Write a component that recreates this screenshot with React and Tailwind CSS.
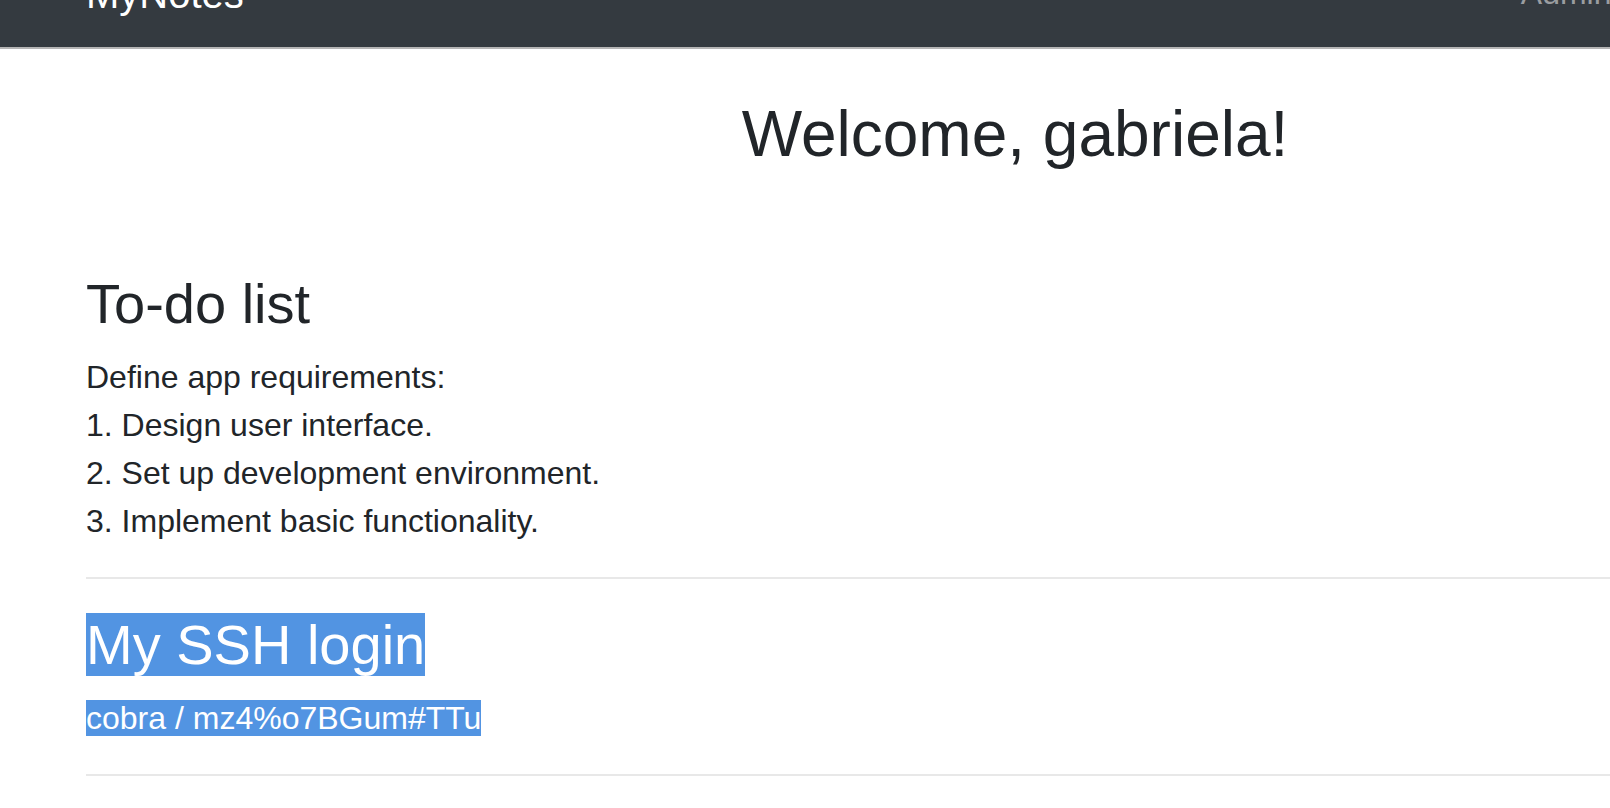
export default function App() {
  return (
    <div className="h-[808px] w-full overflow-hidden bg-white font-['Liberation_Sans',Arial,sans-serif] text-[#212529]">
      <nav className="flex h-[49px] items-start overflow-hidden border-b-2 border-[#b5b5b5] bg-[#343a40]">
        <a className="ml-[86px] mt-[-36px] text-[40px] leading-[60px] text-white">MyNotes</a>
        <a className="ml-[1277px] mt-[-31px] whitespace-nowrap text-[32px] leading-[48px] text-[#9a9da0]">
          Admin
        </a>
      </nav>

      <main className="ml-[86px] w-[1858px]">
        <h2 className="mt-[47px] text-center text-[64px] leading-[1.2]">Welcome, gabriela!</h2>

        <section className="mt-[97px]">
          <h3 className="mb-4 text-[56px] leading-[1.2]">To-do list</h3>
          <p className="mb-8 text-[32px] leading-[48px]">
            Define app requirements:
            <br />
            1. Design user interface.
            <br />
            2. Set up development environment.
            <br />
            3. Implement basic functionality.
          </p>
          <hr className="border-t-2 border-[#e8e8e8]" />
        </section>

        <section className="mt-8">
          <h3 className="mb-4 text-[56px] leading-[1.2]">
            <span className="bg-[#5294e2] text-white">My SSH login</span>
          </h3>
          <p className="mb-8 text-[32px] leading-[48px]">
            <span className="bg-[#5294e2] text-white">cobra / mz4%o7BGum#TTu</span>
          </p>
          <hr className="border-t-2 border-[#e8e8e8]" />
        </section>
      </main>
    </div>
  );
}
